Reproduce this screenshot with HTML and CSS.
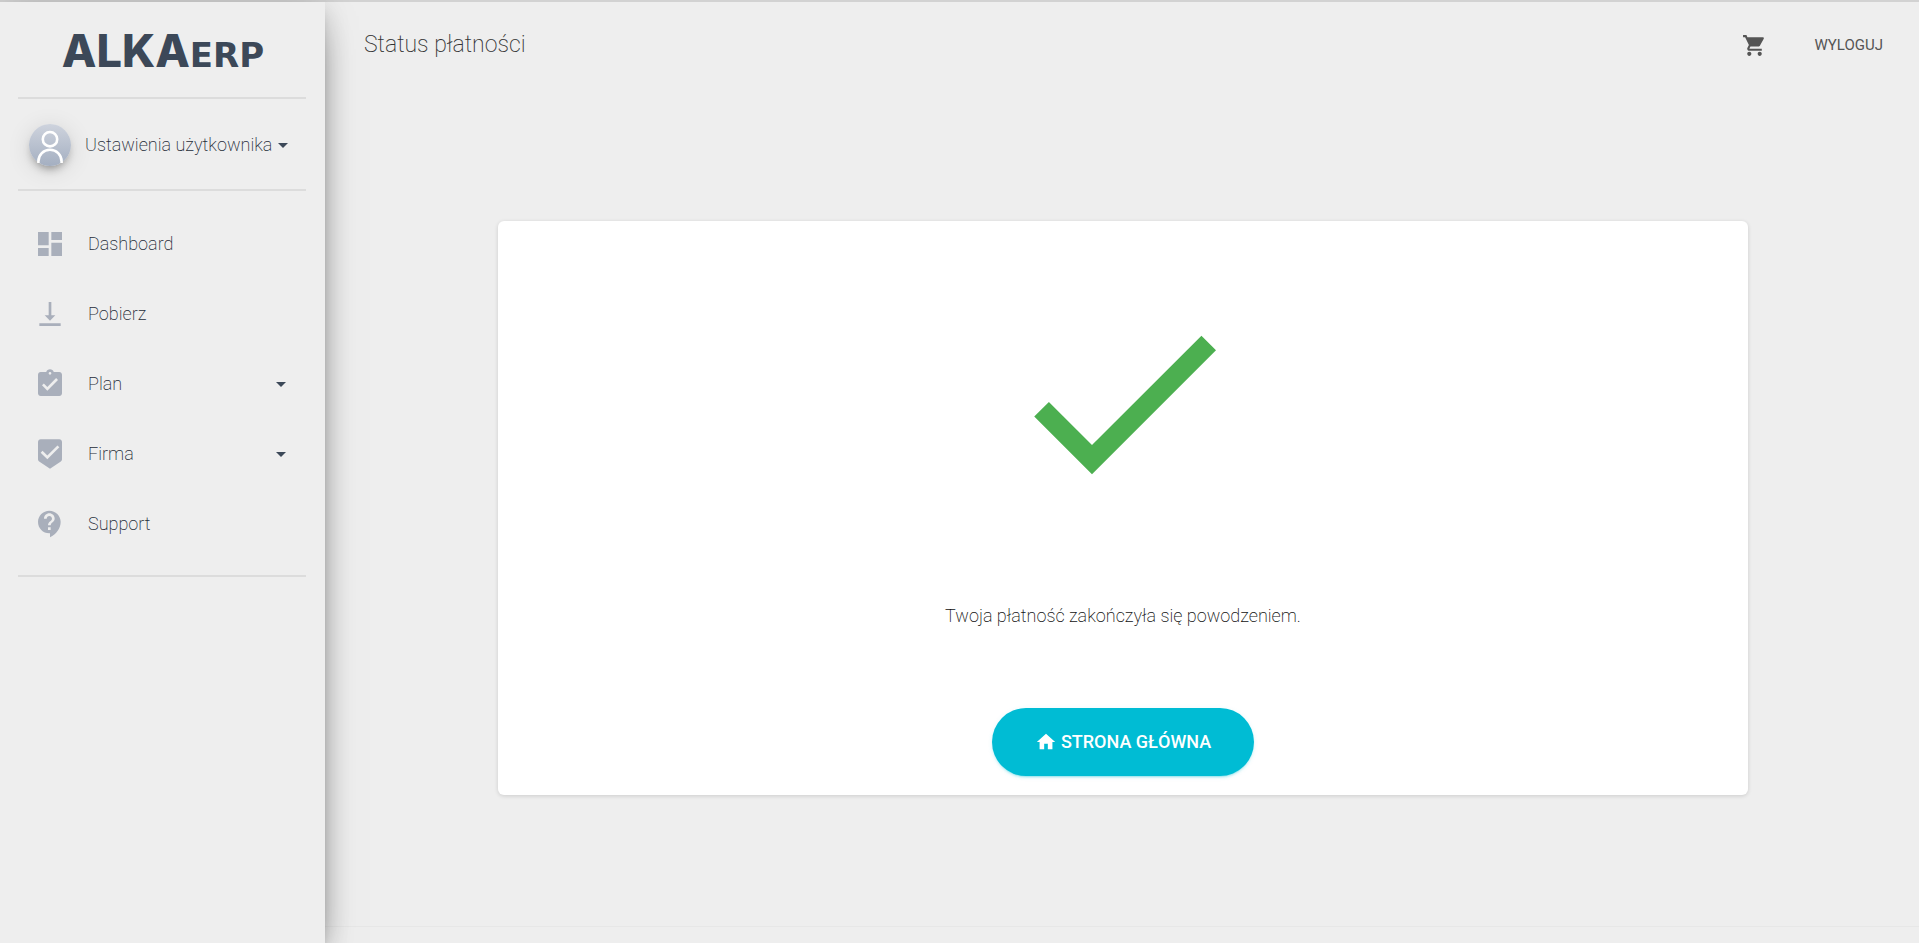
FILE: index.html
```html
<!DOCTYPE html>
<html lang="pl">
<head>
  <meta charset="UTF-8" />
  <meta name="viewport" content="width=device-width, initial-scale=1.0"/>
  <title>Status płatności</title>
  <link rel="stylesheet" href="styles.css">
</head>
<body>
  <div class="wrapper">
    <aside class="sidebar">
      <a class="logo" href="#">ALKA<span class="logo-small">ERP</span></a>

      <button class="user" type="button">
        <span class="avatar">
          <svg viewBox="0 0 42 42">
            <defs>
              <linearGradient id="avatarBg" x1="0" y1="0" x2="0" y2="1">
                <stop offset="0" stop-color="#ced3dd"/>
                <stop offset="1" stop-color="#a4afc1"/>
              </linearGradient>
            </defs>
            <circle cx="21" cy="21" r="21" fill="url(#avatarBg)"/>
            <g fill="none" stroke="#fff" stroke-width="2.6">
              <circle cx="21" cy="15.2" r="7.2"/>
              <path d="M9.400 39v-1.600a11.600 11.600 0 0 1 23.200 0V39"/>
            </g>
          </svg>
        </span>
        <span class="label">Ustawienia użytkownika</span>
        <span class="caret"></span>
      </button>

      <nav class="menu">
        <a class="menu-item" href="#">
          <svg class="icon" viewBox="0 0 24 24"><path d="M3 13h8V3H3v10zm0 8h8v-6H3v6zm10 0h8V11h-8v10zm0-18v6h8V3h-8z"/></svg>
          <span class="label">Dashboard</span>
        </a>
        <a class="menu-item" href="#">
          <svg class="icon" viewBox="0 0 24 24"><path d="M16 13h-3V3h-2v10H8l4 4 4-4zM4 19v2h16v-2H4z"/></svg>
          <span class="label">Pobierz</span>
        </a>
        <a class="menu-item" href="#">
          <svg class="icon" viewBox="0 0 24 24"><path d="M19 3h-4.180C14.400 1.840 13.300 1 12 1c-1.300 0-2.400.84-2.820 2H5c-1.100 0-2 .9-2 2v14c0 1.100.9 2 2 2h14c1.100 0 2-.9 2-2V5c0-1.100-.9-2-2-2zm-7 0c.55 0 1 .45 1 1s-.45 1-1 1-1-.45-1-1 .45-1 1-1zm-2 14l-4-4 1.410-1.410L10 14.170l6.590-6.590L18 9l-8 8z"/></svg>
          <span class="label">Plan</span>
          <span class="caret"></span>
        </a>
        <a class="menu-item" href="#">
          <svg class="icon" viewBox="0 0 24 24"><path d="M19 1H5c-1.100 0-1.990.9-1.990 2L3 15.930c0 .69.35 1.300.88 1.660L12 23l8.110-5.410c.53-.36.88-.97.88-1.660L21 3c0-1.100-.9-2-2-2zm-9 15l-5-5 1.410-1.410L10 13.170l7.590-7.590L19 7l-9 9z"/></svg>
          <span class="label">Firma</span>
          <span class="caret"></span>
        </a>
        <a class="menu-item" href="#">
          <svg class="icon" viewBox="0 0 24 24"><path d="M11.500 2C6.810 2 3 5.810 3 10.500S6.810 19 11.500 19h.5v3c4.860-2.340 8-7 8-11.500C20 5.810 16.190 2 11.500 2zm1 14.500h-2v-2h2v2zm0-3.500h-2c0-3.250 3-3 3-5 0-1.100-.9-2-2-2s-2 .9-2 2h-2c0-2.210 1.790-4 4-4s4 1.790 4 4c0 2.500-3 2.750-3 5z"/></svg>
          <span class="label">Support</span>
        </a>
      </nav>
    </aside>

    <div class="main">
      <header class="navbar">
        <h1 class="title">Status płatności</h1>
        <a class="cart" href="#" aria-label="Koszyk">
          <svg viewBox="0 0 24 24"><path d="M7 18c-1.100 0-1.990.9-1.990 2S5.900 22 7 22s2-.9 2-2-.9-2-2-2zM1 2v2h2l3.600 7.590-1.350 2.450c-.16.28-.25.61-.25.96 0 1.100.9 2 2 2h12v-2H7.420c-.14 0-.25-.11-.25-.25l.03-.12.900-1.630h7.450c.75 0 1.410-.41 1.750-1.030l3.580-6.490c.08-.14.12-.31.12-.48 0-.55-.45-1-1-1H5.210l-.94-2H1zm16 16c-1.100 0-1.990.9-1.990 2s.89 2 1.990 2 2-.9 2-2-.9-2-2-2z"/></svg>
        </a>
        <a class="logout" href="#">WYLOGUJ</a>
      </header>

      <main class="content">
        <section class="card">
          <svg class="check" viewBox="0 0 24 24"><path d="M9 16.170L4.830 12l-1.420 1.410L9 19 21 7l-1.410-1.410z"/></svg>
          <p class="message">Twoja płatność zakończyła się powodzeniem.</p>
          <button class="btn" type="button">
            <svg viewBox="0 0 24 24"><path d="M10 20v-6h4v6h5v-8h3L12 3 2 12h3v8z"/></svg>
            STRONA GŁÓWNA
          </button>
        </section>
      </main>

      <footer class="footer"></footer>
    </div>
  </div>
</body>
</html>
```
FILE: styles.css
```css
* {
  box-sizing: border-box;
}
body {
  margin: 0;
  background: #eee;
  color: #252c38;
  font-family: Roboto, sans-serif;
  font-size: 18px;
  font-weight: 200;
  line-height: 24px;
}
a {
  color: inherit;
  text-decoration: none;
}
button {
  border: 0;
  font: inherit;
  cursor: pointer;
}
svg {
  display: block;
  fill: currentColor;
}
.wrapper {
  display: flex;
  min-height: 100vh;
  border-top: 2px solid #d2d2d2;
}

/* sidebar */
.sidebar {
  flex: none;
  width: 325px;
  padding: 0 19px 0 18px;
  z-index: 1;
  background: #eee;
  box-shadow: 0 16px 38px -12px rgba(0,0,0,0.56), 0 4px 25px 0 rgba(0,0,0,0.12), 0 8px 10px -5px rgba(0,0,0,0.2);
}
.logo {
  display: flex;
  align-items: baseline;
  justify-content: center;
  height: 97px;
  padding: 21px 0 0 2px;
  border-bottom: 2px solid #dcdcdc;
  color: #3c4858;
  font-family: Inter, sans-serif;
  font-size: 45px;
  font-weight: 800;
  line-height: 56px;
}
.logo-small {
  font-family: "DejaVu Sans", sans-serif;
  font-size: 34px;
  font-weight: bold;
}
.user {
  display: flex;
  align-items: center;
  width: 100%;
  height: 92px;
  padding: 2px 18px 0 11px;
  border-bottom: 2px solid #dcdcdc;
  background: transparent;
  color: inherit;
  text-align: left;
}
.avatar {
  width: 42px;
  height: 42px;
  margin-right: 14px;
  border-radius: 50%;
  box-shadow: 0 6px 10px -4px rgba(0,0,0,0.4), 0 4px 25px 0 rgba(0,0,0,0.12);
}
.label {
  flex: 1;
  white-space: nowrap;
}
.caret {
  border-top: 5px solid #3c4858;
  border-left: 5px solid transparent;
  border-right: 5px solid transparent;
}
.menu {
  padding: 18px 20px 16px 16px;
  border-bottom: 2px solid #dcdcdc;
}
.menu-item {
  display: flex;
  align-items: center;
  height: 70px;
}
.icon {
  width: 32px;
  height: 32px;
  margin-right: 22px;
  color: #a9afbb;
}

/* main panel */
.main {
  display: flex;
  flex: 1;
  flex-direction: column;
  min-width: 0;
}
.navbar {
  display: flex;
  align-items: center;
  height: 86px;
  padding: 0 36px 0 39px;
  color: #555;
}
.title {
  flex: 1;
  margin: 0;
  color: #333;
  font-size: 23px;
  font-weight: 200;
}
.cart {
  width: 25px;
  margin-right: 48px;
}
.logout {
  font-size: 15px;
  font-weight: 400;
}
.content {
  flex: 1;
  padding: 133px 46px 60px 48px;
}
.card {
  display: flex;
  flex-direction: column;
  align-items: center;
  margin: 0 8.333%;
  padding: 57px 20px 19px;
  border-radius: 6px;
  background: #fff;
  box-shadow: 0 1px 4px 0 rgba(0,0,0,0.14);
}
.check {
  width: 248px;
  height: 248px;
  color: #4caf50;
}
.message {
  margin: 78px 0 80px;
  color: #111;
}
.btn {
  display: flex;
  align-items: center;
  justify-content: center;
  gap: 4px;
  height: 68px;
  padding: 0 43px;
  border-radius: 34px;
  background: #00bcd4;
  color: #fff;
  font-weight: 500;
  box-shadow: 0 2px 2px 0 rgba(0,188,212,0.14), 0 3px 1px -2px rgba(0,188,212,0.2), 0 1px 5px 0 rgba(0,188,212,0.12);
}
.btn svg {
  width: 22px;
  height: 22px;
}
.footer {
  height: 17px;
  border-top: 1px solid #e7e7e7;
}
```
